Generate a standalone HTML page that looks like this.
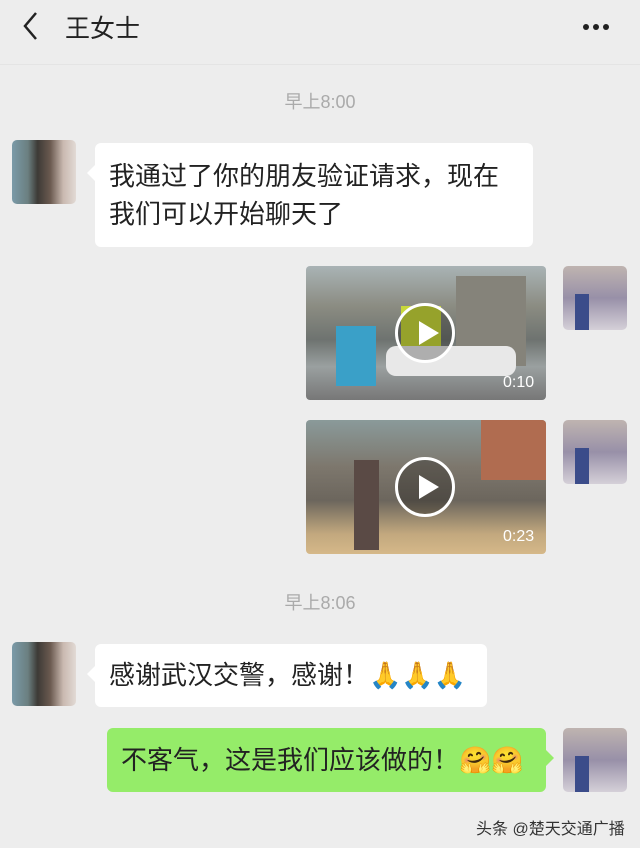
<!DOCTYPE html>
<html><head><meta charset="utf-8"><style>
body{margin:0;width:640px;height:848px;background:#ededed;font-family:"Liberation Sans","Noto Sans CJK SC",sans-serif;position:relative;overflow:hidden}
.a{position:absolute}
.hdr{left:0;top:0;width:640px;height:64px;background:#ededed;border-bottom:1px solid #e4e4e4}
.t{color:#aaa;font-size:18px;width:640px;text-align:center}
.b{background:#fff;border-radius:6px;font-size:26px;color:#222;line-height:38px;padding:0 14px;box-sizing:border-box;white-space:nowrap}
.b:before{content:"";position:absolute;left:-8px;top:22px;border:8px solid transparent;border-left:0;border-right-color:#fff}
.g{background:#95ec69}
.g:before{left:auto;right:-8px;border-right:0;border-left:8px solid #95ec69;border-right-color:transparent}
.av{width:64px;height:64px;border-radius:5px;overflow:hidden}
.vid{border-radius:4px;overflow:hidden}
.play{width:60px;height:60px;border:3px solid #fff;border-radius:50%;box-sizing:border-box;background:rgba(0,0,0,.25)}
.play:after{content:"";position:absolute;left:21px;top:15px;border-left:20px solid #fff;border-top:12px solid transparent;border-bottom:12px solid transparent}
.dur{color:#fff;font-size:16px}
.em{font-size:26px}
</style></head><body>
<div class="a hdr"></div>
<svg class="a" style="left:20px;top:10px" width="22" height="32"><path d="M16 3 L5 16 L16 29" stroke="#222" stroke-width="2.5" fill="none"/></svg>
<div class="a" style="left:65px;top:9px;font-size:25px;color:#222">王女士</div>
<div class="a" style="left:583px;top:24px;font-size:0">
<span style="display:inline-block;width:6px;height:6px;background:#222;border-radius:50%;margin-right:4px"></span><span style="display:inline-block;width:6px;height:6px;background:#222;border-radius:50%;margin-right:4px"></span><span style="display:inline-block;width:6px;height:6px;background:#222;border-radius:50%"></span></div>

<div class="a t" style="top:88px">早上8:00</div>
<div class="a av" style="left:12px;top:140px;background:linear-gradient(90deg,#7a9aa8 0,#6b7f80 25%,#3d3a36 40%,#6b5a50 60%,#c9b9b0 80%,#e2dad5 100%)"></div>
<div class="a b" style="left:95px;top:143px;width:438px;height:104px;padding-top:14px">我通过了你的朋友验证请求，现在<br>我们可以开始聊天了</div>

<div class="a vid" style="left:306px;top:266px;width:240px;height:134px;background:linear-gradient(180deg,#a9b3b5 0,#8b8c82 30%,#6e7370 55%,#9aa0a0 75%,#777 100%)">
<div class="a" style="left:30px;top:60px;width:40px;height:60px;background:#3aa0c8"></div>
<div class="a" style="left:95px;top:40px;width:40px;height:50px;background:#c8d83a"></div>
<div class="a" style="left:150px;top:10px;width:70px;height:90px;background:#85837a"></div>
<div class="a" style="left:80px;top:80px;width:130px;height:30px;background:#e8e8e8;border-radius:10px"></div>
<div class="a play" style="left:89px;top:37px"></div><div class="a dur" style="left:197px;top:108px">0:10</div></div>
<div class="a av" style="left:563px;top:266px;background:linear-gradient(180deg,#bfb4b0,#9890a8 50%,#d5d0d8)"><div class="a" style="left:12px;top:28px;width:14px;height:36px;background:#3b4c8a"></div></div>

<div class="a vid" style="left:306px;top:420px;width:240px;height:134px;background:linear-gradient(180deg,#8a9a9a 0,#7d776d 35%,#6c665d 60%,#c2a87e 85%,#d5b889 100%)">
<div class="a" style="left:175px;top:0;width:65px;height:60px;background:#b06c50"></div>
<div class="a" style="left:48px;top:40px;width:25px;height:90px;background:#5a4a45"></div>
<div class="a play" style="left:89px;top:37px"></div><div class="a dur" style="left:197px;top:108px">0:23</div></div>
<div class="a av" style="left:563px;top:420px;background:linear-gradient(180deg,#bfb4b0,#9890a8 50%,#d5d0d8)"><div class="a" style="left:12px;top:28px;width:14px;height:36px;background:#3b4c8a"></div></div>

<div class="a t" style="top:589px">早上8:06</div>
<div class="a av" style="left:12px;top:642px;background:linear-gradient(90deg,#7a9aa8 0,#6b7f80 25%,#3d3a36 40%,#6b5a50 60%,#c9b9b0 80%,#e2dad5 100%)"></div>
<div class="a b" style="left:95px;top:644px;width:392px;height:63px;padding-top:12px">感谢武汉交警，感谢！<span class="em">🙏🙏🙏</span></div>

<div class="a b g" style="left:107px;top:728px;width:439px;height:64px;padding-top:13px;padding-left:14px">不客气，这是我们应该做的！<span class="em">🤗🤗</span></div>
<div class="a av" style="left:563px;top:728px;background:linear-gradient(180deg,#bfb4b0,#9890a8 50%,#d5d0d8)"><div class="a" style="left:12px;top:28px;width:14px;height:36px;background:#3b4c8a"></div></div>

<div class="a" style="left:476px;top:815px;font-size:16px;color:#333">头条 @楚天交通广播</div>
</body></html>
